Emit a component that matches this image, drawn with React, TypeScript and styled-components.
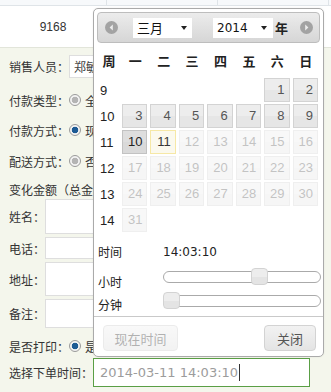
import React from 'react';
import styled, { createGlobalStyle, css } from 'styled-components';

const GlobalStyle = createGlobalStyle`
  *, *::before, *::after { box-sizing: border-box; }
  html, body { margin: 0; padding: 0; }
  body {
    background: #f4f6ec;
    font-family: "Liberation Sans", "Noto Sans CJK SC", sans-serif;
    font-size: 12px;
    color: #333;
  }
`;

const Page = styled.div`
  position: relative;
  width: 331px;
  height: 392px;
  overflow: hidden;
  background: #f4f6ec;
`;

/* ---------- table row behind the picker ---------- */

const HeadStrip = styled.div`
  display: grid;
  grid-template-columns: 107px 111px 111px 1fr;
  height: 6px;
  background: #f7f9fb;
  border-bottom: 1px solid #dfe4e8;
`;

const HeadCell = styled.div`
  border-right: 1px solid #dfe4e8;
`;

const DataRow = styled.div`
  display: grid;
  grid-template-columns: 106px 1fr;
  align-items: center;
  height: 42px;
  background: #fff;
  border-bottom: 1px solid #e2e5da;
`;

const DataCell = styled.div`
  text-align: center;
  font-size: 12px;
  color: #333;
`;

/* ---------- form ---------- */

const Form = styled.div`
  padding: 7px 0 0 9px;
`;

// rows that sit under the picker are cut where the picker starts
const FieldRow = styled.div<{ $h: number; $mt?: number; $clip?: boolean }>`
  display: flex;
  align-items: center;
  height: ${(p) => p.$h}px;
  margin-top: ${(p) => p.$mt ?? 0}px;
  white-space: nowrap;
  ${(p) =>
    p.$clip &&
    css`
      width: 85px;
      overflow: hidden;
    `}
`;

const FieldLabel = styled.span`
  flex: none;
  font-family: "Noto Sans CJK SC", sans-serif;
  font-size: 12px;
  color: #333;
`;

const TextBox = styled.div<{ $w: number }>`
  flex: none;
  width: ${(p) => p.$w}px;
  height: 100%;
  padding-left: 4px;
  display: flex;
  align-items: center;
  background: #fff;
  border: 1px solid #dedede;
  font-family: "Noto Sans CJK SC", sans-serif;
  font-size: 12px;
  color: #444;
`;

const Radio = styled.span<{ $on?: boolean }>`
  flex: none;
  width: 12px;
  height: 12px;
  margin-right: 4px;
  border-radius: 50%;
  border: 1px solid #9a9a9a;
  background: radial-gradient(
    circle,
    ${(p) => (p.$on ? '#1c5a94' : '#b4b4b4')} 0 3px,
    #f3f3f3 3.6px
  );
`;

const Option = styled.span`
  flex: none;
  font-family: "Noto Sans CJK SC", sans-serif;
  font-size: 12px;
  color: #333;
  margin-right: 10px;
`;

const DateInput = styled.div`
  width: 217px;
  height: 100%;
  padding-left: 6px;
  display: flex;
  align-items: center;
  background: #fff;
  border: 1px solid #5a9f45;
  font-family: "DejaVu Sans", sans-serif;
  font-size: 13px;
  color: #9c9c9c;
`;

const Caret = styled.span`
  display: inline-block;
  width: 1px;
  height: 17px;
  margin-left: 1px;
  background: #333;
`;

/* ---------- date picker ---------- */

const Popup = styled.div`
  position: absolute;
  left: 93px;
  top: 8px;
  width: 231px;
  padding: 3px 0 5px;
  background: #fff;
  border: 1px solid #aaa;
  border-radius: 5px;
  box-shadow: 0 0 2px rgba(0, 0, 0, 0.08);
  color: #222;
`;

const Header = styled.div`
  height: 31px;
  margin: 0 3px;
  padding: 0 6px 0 7px;
  display: flex;
  align-items: center;
  border: 1px solid #bdbdbd;
  border-radius: 4px;
  background: linear-gradient(#ececec, #d6d6d6);
`;

const NavIcon = styled.svg<{ $flip?: boolean }>`
  width: 13px;
  height: 13px;
  flex: none;
  ${(p) =>
    p.$flip &&
    css`
      margin-left: auto;
      transform: scaleX(-1);
    `}
`;

const Select = styled.div<{ $w: number; $ml: number; $pr: number; $num?: boolean }>`
  width: ${(p) => p.$w}px;
  height: 20px;
  margin-left: ${(p) => p.$ml}px;
  padding: 0 ${(p) => p.$pr}px 0 4px;
  display: flex;
  align-items: center;
  justify-content: space-between;
  background: #fff;
  font-family: ${(p) => (p.$num ? '"DejaVu Sans", sans-serif' : '"Noto Sans CJK SC", sans-serif')};
  font-size: ${(p) => (p.$num ? 12 : 13)}px;
  color: #111;
`;

const Arrow = styled.span`
  width: 0;
  height: 0;
  border-left: 3.5px solid transparent;
  border-right: 3.5px solid transparent;
  border-top: 4px solid #222;
`;

const YearMark = styled.span`
  margin-left: 2px;
  font-family: "Noto Sans CJK SC", sans-serif;
  font-size: 13px;
  font-weight: 700;
  color: #222;
`;

const CalGrid = styled.div`
  margin: 0 3px;
  display: grid;
  grid-template-columns: 24px repeat(7, 1fr);
  grid-template-rows: 34px repeat(6, 26px);
`;

const WeekHead = styled.div`
  align-self: center;
  text-align: center;
  font-family: "Noto Sans CJK SC", sans-serif;
  font-size: 13px;
  font-weight: 700;
  color: #222;
`;

const WeekNo = styled.div`
  align-self: center;
  padding-left: 3px;
  font-family: "Liberation Sans", sans-serif;
  font-size: 13px;
  color: #222;
`;

type DayState = 'plain' | 'hover' | 'today' | 'disabled';

const dayLook = {
  plain: css`
    border-color: #d3d3d3;
    background: linear-gradient(#ededed 50%, #e6e6e6 50%);
    color: #555;
  `,
  hover: css`
    border-color: #c2c2c2;
    background: linear-gradient(#dedede 50%, #d9d9d9 50%);
    color: #222;
  `,
  today: css`
    border-color: #f6e8a6;
    background: #fbf9ee;
    color: #363636;
  `,
  disabled: css`
    border-color: #d3d3d3;
    background: linear-gradient(#ededed 50%, #e6e6e6 50%);
    color: #555;
    opacity: 0.35;
  `,
};

const Day = styled.div<{ $state: DayState }>`
  margin: 1px 2px 1px 1px;
  padding-right: 4px;
  border: 1px solid;
  text-align: right;
  line-height: 22px;
  font-family: "Liberation Sans", sans-serif;
  font-size: 13px;
  ${(p) => dayLook[p.$state]}
`;

const Blank = styled.div``;

const TimeGrid = styled.div`
  padding: 0 2px 0 4px;
  display: grid;
  grid-template-columns: 65px 1fr;
  grid-template-rows: 35px 24px 24px;
`;

const TimeLabel = styled.div<{ $top?: number }>`
  align-self: ${(p) => (p.$top === undefined ? 'center' : 'start')};
  margin-top: ${(p) => p.$top ?? 3}px;
  line-height: 16px;
  font-family: "Noto Sans CJK SC", sans-serif;
  font-size: 12px;
  color: #222;
`;

const TimeValue = styled.div`
  align-self: center;
  margin-top: 3px;
  font-family: "DejaVu Sans", sans-serif;
  font-size: 12px;
  color: #222;
`;

const Slider = styled.div`
  position: relative;
  height: 17px;
`;

const Track = styled.div`
  height: 12px;
  margin-top: 3px;
  border: 1px solid #aaa;
  border-radius: 6px;
  background: #fff;
`;

const Handle = styled.span`
  position: absolute;
  top: 0;
  width: 17px;
  height: 17px;
  margin-left: -8px;
  border: 1px solid #d3d3d3;
  border-radius: 4px;
  background: linear-gradient(#ededed 50%, #e4e4e4 50%);
`;

const ButtonPane = styled.div`
  padding: 8px 7px 0 9px;
  display: flex;
  justify-content: space-between;
  border-top: 1px solid #c9c9c9;
`;

const PaneButton = styled.div<{ $w: number; $off?: boolean }>`
  width: ${(p) => p.$w}px;
  height: 26px;
  display: flex;
  align-items: center;
  justify-content: center;
  border: 1px solid #d3d3d3;
  border-radius: 4px;
  background: linear-gradient(#f2f2f2, #e4e4e4);
  font-family: "Noto Sans CJK SC", sans-serif;
  font-size: 13px;
  color: #555;
  ${(p) =>
    p.$off &&
    css`
      opacity: 0.45;
    `}
`;

const NavArrow = ({ flip }: { flip?: boolean }) => (
  <NavIcon $flip={flip} viewBox="0 0 13 13">
    <circle cx="6.5" cy="6.5" r="6.5" fill="#a3a3a3" />
    <path d="M7.8 3.6 L4.6 6.5 L7.8 9.4 Z" fill="#ececec" />
  </NavIcon>
);

const weekNames = ['一', '二', '三', '四', '五', '六', '日'];

// March 2014, weeks start on Monday; the 1st is a Saturday
const weeks: { no: number; days: (number | null)[] }[] = [
  { no: 9, days: [null, null, null, null, null, 1, 2] },
  { no: 10, days: [3, 4, 5, 6, 7, 8, 9] },
  { no: 11, days: [10, 11, 12, 13, 14, 15, 16] },
  { no: 12, days: [17, 18, 19, 20, 21, 22, 23] },
  { no: 13, days: [24, 25, 26, 27, 28, 29, 30] },
  { no: 14, days: [31, null, null, null, null, null, null] },
];

const stateOf = (d: number): DayState => {
  if (d === 11) return 'today';
  if (d === 10) return 'hover';
  if (d > 11) return 'disabled';
  return 'plain';
};

const hour = 14;
const minute = 3;

const App: React.FC = () => (
  <Page>
    <GlobalStyle />
    <HeadStrip>
      <HeadCell />
      <HeadCell />
      <HeadCell />
      <div />
    </HeadStrip>
    <DataRow>
      <DataCell>9168</DataCell>
      <div />
    </DataRow>

    <Form>
      <FieldRow $h={23} $clip>
        <FieldLabel>销售人员：</FieldLabel>
        <TextBox $w={120}>郑敏</TextBox>
      </FieldRow>
      <FieldRow $h={28} $mt={8} $clip>
        <FieldLabel>付款类型：</FieldLabel>
        <Radio />
        <Option>全部</Option>
      </FieldRow>
      <FieldRow $h={28} $mt={2} $clip>
        <FieldLabel>付款方式：</FieldLabel>
        <Radio $on />
        <Option>现金</Option>
      </FieldRow>
      <FieldRow $h={28} $mt={3} $clip>
        <FieldLabel>配送方式：</FieldLabel>
        <Radio />
        <Option>否</Option>
      </FieldRow>
      <FieldRow $h={20} $mt={4} $clip>
        <FieldLabel>变化金额（总金额）：</FieldLabel>
      </FieldRow>
      <FieldRow $h={35} $clip>
        <FieldLabel>姓名：</FieldLabel>
        <TextBox $w={200} />
      </FieldRow>
      <FieldRow $h={22} $mt={3} $clip>
        <FieldLabel>电话：</FieldLabel>
        <TextBox $w={200} />
      </FieldRow>
      <FieldRow $h={34} $mt={3} $clip>
        <FieldLabel>地址：</FieldLabel>
        <TextBox $w={200} />
      </FieldRow>
      <FieldRow $h={29} $mt={3} $clip>
        <FieldLabel>备注：</FieldLabel>
        <TextBox $w={200} />
      </FieldRow>
      <FieldRow $h={24} $mt={6} $clip>
        <FieldLabel>是否打印：</FieldLabel>
        <Radio $on />
        <Option>是</Option>
      </FieldRow>
      <FieldRow $h={29}>
        <FieldLabel>选择下单时间：</FieldLabel>
        <DateInput>
          2014-03-11 14:03:10
          <Caret />
        </DateInput>
      </FieldRow>
    </Form>

    <Popup>
      <Header>
        <NavArrow />
        <Select $w={59} $ml={15} $pr={5}>
          三月
          <Arrow />
        </Select>
        <Select $w={60} $ml={21} $pr={6} $num>
          2014
          <Arrow />
        </Select>
        <YearMark>年</YearMark>
        <NavArrow flip />
      </Header>

      <CalGrid>
        <WeekHead>周</WeekHead>
        {weekNames.map((w) => (
          <WeekHead key={w}>{w}</WeekHead>
        ))}
        {weeks.map((wk) => (
          <React.Fragment key={wk.no}>
            <WeekNo>{wk.no}</WeekNo>
            {wk.days.map((d, i) =>
              d === null ? (
                <Blank key={i} />
              ) : (
                <Day key={i} $state={stateOf(d)}>
                  {d}
                </Day>
              )
            )}
          </React.Fragment>
        ))}
      </CalGrid>

      <TimeGrid>
        <TimeLabel>时间</TimeLabel>
        <TimeValue>14:03:10</TimeValue>
        <TimeLabel $top={6}>小时</TimeLabel>
        <Slider>
          <Track />
          <Handle style={{ left: `${(hour / 23) * 100}%` }} />
        </Slider>
        <TimeLabel $top={5}>分钟</TimeLabel>
        <Slider>
          <Track />
          <Handle style={{ left: `${(minute / 59) * 100}%` }} />
        </Slider>
      </TimeGrid>

      <ButtonPane>
        <PaneButton $w={75} $off>
          现在时间
        </PaneButton>
        <PaneButton $w={52}>关闭</PaneButton>
      </ButtonPane>
    </Popup>
  </Page>
);

export default App;
